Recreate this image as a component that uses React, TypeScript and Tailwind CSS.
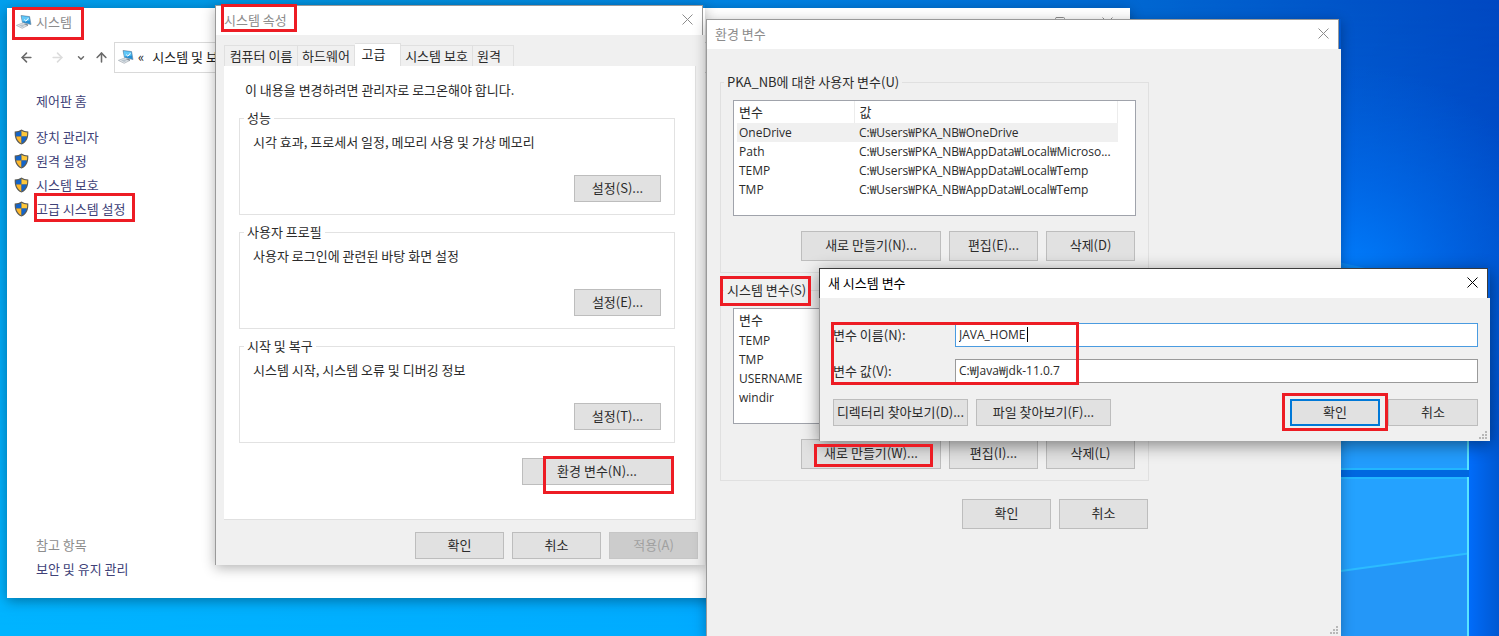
import React from "react";
import { ArrowLeft, ArrowRight, ArrowUp, ChevronDown, Square } from "lucide-react";

const kr = "font-['Noto_Sans_CJK_KR',sans-serif]";
const latin = "font-['Open_Sans','Noto_Sans_CJK_KR',sans-serif]";

function CloseIcon() {
  return (
    <svg width="11" height="11" viewBox="0 0 11 11" fill="none" stroke="currentColor" strokeWidth="1">
      <path d="M.5.5l10 10M10.5.5l-10 10" />
    </svg>
  );
}

function ComputerIcon() {
  return (
    <svg width="16" height="14" viewBox="0 0 16 14" className="shrink-0">
      <path d="M5 .4 13.6 1.600 15 9.600 6.400 7.400z" fill="#2590d6" stroke="#6f879a" strokeWidth=".6" />
      <path d="M5.600 1.100 13 2.100l.6 3.500L6.400 6.500z" fill="#62c8f8" />
      <path d="m8.200 4.600 1.700 1.600 2.500-3" stroke="#fff" strokeWidth="1" fill="none" />
      <path d="m8.500 8.600 3.500.9v1.500l-3.500-.6z" fill="#6c7984" />
      <path d="M.4 10.400 5.600 8.400l5.900 2.200-5.300 2.700z" fill="#e4e9ed" stroke="#a3abb2" strokeWidth=".7" />
      <path d="m3 10.400 2.800-1 3.200 1.300-2.800 1.200z" fill="#b7c2cb" />
    </svg>
  );
}

function ShieldIcon() {
  return (
    <svg width="15" height="16" viewBox="0 0 15 16" className="shrink-0">
      <path d="M7.5.4C5.6 1.7 3.3 2.3.7 2.4c-.3 6 1.4 10.6 6.8 13.2 5.4-2.6 7.1-7.2 6.8-13.2C11.7 2.3 9.4 1.7 7.5.4z" fill="#5b5b55" />
      <path d="M7.5 1.7C5.9 2.7 4 3.2 1.8 3.4c0 1.6.1 3 .4 4.2h5.3z" fill="#1464c8" />
      <path d="M7.5 1.7c1.6 1 3.5 1.5 5.7 1.7 0 1.6-.1 3-.4 4.2H7.5z" fill="#ffc83a" />
      <path d="M7.5 7.6H2.2c.7 3.2 2.4 5.4 5.3 6.9z" fill="#ffb82a" />
      <path d="M7.5 7.6h5.3c-.7 3.2-2.4 5.4-5.3 6.9z" fill="#1464c8" />
    </svg>
  );
}

function Grip() {
  return (
    <svg width="10" height="9" viewBox="0 0 10 9" fill="#b8b8b8" className="absolute right-[2px] bottom-[1px]">
      <path d="M7 0h2v2H7zM4 3h2v2H4zM7 3h2v2H7zM1 6h2v2H1zM4 6h2v2H4zM7 6h2v2H7z" />
    </svg>
  );
}

function Wallpaper() {
  return (
    <svg className="absolute inset-0 h-full w-full" viewBox="0 0 1499 636" preserveAspectRatio="none" aria-hidden="true">
      <defs>
        <linearGradient id="sky" x1="0" x2="1" y1="0" y2="0">
          <stop offset="0" stopColor="#00a0ee" />
          <stop offset=".25" stopColor="#0092e0" />
          <stop offset=".5" stopColor="#0084e4" />
          <stop offset=".75" stopColor="#0068d2" />
          <stop offset=".9" stopColor="#0054c8" />
          <stop offset="1" stopColor="#0048c2" />
        </linearGradient>
        <linearGradient id="floor" x1="0" x2="1" y1="0" y2="0">
          <stop offset="0" stopColor="#00b4ff" />
          <stop offset=".45" stopColor="#00acff" />
          <stop offset=".9" stopColor="#0070ff" />
          <stop offset="1" stopColor="#005ad8" />
        </linearGradient>
        <linearGradient id="fade" x1="0" x2="0" y1="0" y2="1">
          <stop offset="0" stopColor="#000" />
          <stop offset="1" stopColor="#fff" />
        </linearGradient>
        <mask id="down">
          <rect width="1499" height="636" fill="url(#fade)" />
        </mask>
        <radialGradient id="glow" gradientUnits="userSpaceOnUse" cx="1345" cy="285" r="220">
          <stop offset="0" stopColor="#0080ff" />
          <stop offset=".5" stopColor="#0070f0" stopOpacity=".5" />
          <stop offset="1" stopColor="#0068e4" stopOpacity="0" />
        </radialGradient>
        <linearGradient id="edge" x1="0" x2="1" y1="0" y2="0">
          <stop offset="0" stopColor="#006cfa" />
          <stop offset="1" stopColor="#0058d2" />
        </linearGradient>
      </defs>
      <rect width="1499" height="636" fill="url(#sky)" />
      <rect width="1499" height="636" fill="url(#floor)" mask="url(#down)" />
      <rect x="1100" width="399" height="520" fill="url(#glow)" />
      <rect x="1330" y="440" width="169" height="196" fill="#0068e0" />
      <rect x="1469" y="440" width="30" height="196" fill="url(#edge)" />
      <path d="M1330 260l40 9h-40z" fill="#129cff" opacity=".5" />
      <rect x="1330" y="440" width="139" height="30" fill="#229cfd" />
      <rect x="1330" y="477" width="139" height="159" fill="#24a2ff" />
      <path d="M1330 572.500l138-19V636h-138z" fill="#2497f8" />
      <path d="M1330 572.500l138-19" stroke="#2cbcff" strokeWidth="2" />
      <path d="M1330 469h138M1330 478h138" stroke="#22b6ff" strokeWidth="2" />
      <path d="M1468 440v30M1468 477v159" stroke="#58e4ff" strokeWidth="2" />
    </svg>
  );
}

function Dialog({ place, title, active, children }: { place: string; title: string; active?: boolean; children: React.ReactNode }) {
  return (
    <section
      aria-label={title}
      className={`absolute flex flex-col ${place} ${active ? "shadow-[0_4px_16px_rgba(0,0,0,0.45)]" : "shadow-[0_3px_12px_rgba(0,0,0,0.3)]"}`}
    >
      <header
        className={`mr-[2px] flex h-[30px] shrink-0 items-center justify-between border-t border-r border-l bg-white pr-[9px] pb-[2px] pl-2 ${active ? "border-[#3c3c3c] text-black" : "border-[#9a9a9a] text-[#8c8c8c]"}`}
      >
        <h2 className="text-[13px]">{title}</h2>
        <button aria-label="닫기">
          <CloseIcon />
        </button>
      </header>
      <div className="flex grow flex-col border-l border-[#9a9a9a] bg-[#f0f0f0]">{children}</div>
    </section>
  );
}

function Btn({ children, size, primary, disabled }: { children: React.ReactNode; size: string; primary?: boolean; disabled?: boolean }) {
  const look = disabled
    ? "border border-[#c6c6c6] bg-[#cccccc] text-[#a0a0a0]"
    : primary
      ? "border-2 border-[#0078d7] bg-[#e1e1e1]"
      : "border border-[#bdbdbd] bg-[#e1e1e1]";
  return (
    <button disabled={disabled} className={`flex shrink-0 items-center justify-center pb-[2px] text-[13px] whitespace-nowrap ${size} ${look}`}>
      {children}
    </button>
  );
}

function SettingGroup({ title, text, button }: { title: string; text: string; button: string }) {
  return (
    <fieldset className="h-[105px] border border-[#e2e2e2] px-[13px]">
      <legend className="-ml-[9px] px-[3px] text-[13px] leading-4">{title}</legend>
      <p className="mt-[6px] leading-5">{text}</p>
      <div className="mt-[23px] flex justify-end">
        <Btn size="h-[27px] w-[87px]">{button}</Btn>
      </div>
    </fieldset>
  );
}

function VariableGroup({ title, rows, valueHeading, selected, buttons }: { title: string; rows: string[][]; valueHeading?: string; selected?: string; buttons: string[] }) {
  return (
    <fieldset className="h-[199px] border border-[#e0e0e0] px-[12px]">
      <legend className="-ml-[9px] px-[3px] leading-4">{title}</legend>
      <div className="mt-[10px] h-[116px] border border-[#a0a3ab] bg-white pr-[17px] pl-[3px]">
        <table className="w-full table-fixed border-collapse text-left">
          <thead>
            <tr className="h-[22px]">
              <th className="w-[117px] border-r border-[#ececec] p-0 pl-[2px] leading-5 font-normal">변수</th>
              <th className="border-r border-[#ececec] p-0 pl-[5px] leading-5 font-normal">{valueHeading}</th>
            </tr>
          </thead>
          <tbody className={`text-[12px] ${latin}`}>
            {rows.map(([name, value]) => (
              <tr key={name} className={`h-[19px] ${name === selected ? "bg-[#f0f0f0]" : ""}`}>
                <td className="p-0 pl-[2px] leading-[19px]">{name}</td>
                <td className="truncate p-0 pr-1 pl-[5px] leading-[19px]">{value}</td>
              </tr>
            ))}
          </tbody>
        </table>
      </div>
      <div className="mt-[15px] mr-[1px] flex justify-end gap-2">
        <Btn size="h-[30px] w-[140px]">{buttons[0]}</Btn>
        <Btn size="h-[30px] w-[89px]">{buttons[1]}</Btn>
        <Btn size="h-[30px] w-[89px]">{buttons[2]}</Btn>
      </div>
    </fieldset>
  );
}

function Mark({ place }: { place: string }) {
  return <div aria-hidden="true" className={`pointer-events-none absolute border-3 border-[#ed1c24] ${place}`} />;
}

const userVars = [
  ["OneDrive", "C:₩Users₩PKA_NB₩OneDrive"],
  ["Path", "C:₩Users₩PKA_NB₩AppData₩Local₩Microso..."],
  ["TEMP", "C:₩Users₩PKA_NB₩AppData₩Local₩Temp"],
  ["TMP", "C:₩Users₩PKA_NB₩AppData₩Local₩Temp"],
];
const systemVars = [["TEMP", ""], ["TMP", ""], ["USERNAME", ""], ["windir", ""]];
const tasks = ["장치 관리자", "원격 설정", "시스템 보호", "고급 시스템 설정"];
const tabs = [
  ["컴퓨터 이름", "w-[74px]"],
  ["하드웨어", "w-[57px]"],
  ["고급", "w-[46px]"],
  ["시스템 보호", "w-[72px]"],
  ["원격", "w-[41px]"],
];

function SystemWindow() {
  return (
    <section className="absolute top-[8px] left-[7px] flex h-[590px] w-[1123px] flex-col bg-white shadow-[0_3px_12px_rgba(0,0,0,0.35)]">
      <header className="flex h-[30px] shrink-0 items-center gap-1 pr-[9px] pb-[2px] pl-[9px] text-[#8c8c8c]">
        <ComputerIcon />
        <h1>시스템</h1>
        <div className="ml-auto flex items-center gap-9 pr-2">
          <Square size={12} strokeWidth={2} />
          <CloseIcon />
        </div>
      </header>
      <nav className="flex h-[38px] shrink-0 items-center pt-[1px] pl-3 text-[#6a6a6a]">
        <ArrowLeft size={15} strokeWidth={2.500} />
        <ArrowRight size={15} strokeWidth={2.500} className="ml-4 text-[#dcdcdc]" />
        <ChevronDown size={10} strokeWidth={3.500} className="ml-[11px]" />
        <ArrowUp size={15} strokeWidth={2.500} className="ml-2" />
        <div className="ml-[5px] flex h-[31px] grow items-center border border-[#d9d9d9] pb-[2px] pl-[3px] text-[#222]">
          <ComputerIcon />
          <span className="ml-1 leading-4">«</span>
          <span className="ml-2 leading-4">시스템 및 보안</span>
        </div>
      </nav>
      <aside className="flex grow flex-col pt-[13px] pb-[17px] pl-[7px] text-[#404278]">
        <a href="#home" className="ml-[22px] leading-6">제어판 홈</a>
        <ul className="mt-3">
          {tasks.map((t) => (
            <li key={t}>
              <a href="#task" className="flex h-6 items-center gap-[7px]">
                <ShieldIcon />
                {t}
              </a>
            </li>
          ))}
        </ul>
        <p className="mt-auto ml-[22px] leading-6 text-[#8d8d8d]">참고 항목</p>
        <a href="#security" className="ml-[22px] leading-6">보안 및 유지 관리</a>
      </aside>
    </section>
  );
}

export default function App() {
  return (
    <main className={`relative min-h-screen overflow-hidden bg-[#00a0f0] text-[13px] text-[#2b2b2b] ${kr}`}>
      <Wallpaper />
      <SystemWindow />

      <Dialog place="top-[5px] left-[215px] w-[490px]" title="시스템 속성">
        <div className="px-2 pt-2 pb-[6px]">
          <div role="tablist" className="flex items-end">
            {tabs.map(([name, width]) => (
              <button
                key={name}
                role="tab"
                aria-selected={name === "고급"}
                className={`border-t border-r border-[#e0e0e0] whitespace-nowrap ${width} ${name === "고급" ? "h-[23px] bg-white pr-2 pb-1" : "h-[21px] bg-[#f0f0f0] pb-[2px]"} ${name === "컴퓨터 이름" ? "border-l" : ""} ${name === "원격" ? "pr-2" : ""}`}
              >
                {name}
              </button>
            ))}
          </div>
          <div className="mr-[1px] h-[454px] border-r border-b border-[#e0e0e0] bg-white pt-[14px] pr-[20px] pl-[15px]">
            <p className="pl-[6px] leading-5">이 내용을 변경하려면 관리자로 로그온해야 합니다.</p>
            <div className="mt-[10px] flex flex-col gap-[9px]">
              <SettingGroup title="성능" text="시각 효과, 프로세서 일정, 메모리 사용 및 가상 메모리" button="설정(S)..." />
              <SettingGroup title="사용자 프로필" text="사용자 로그인에 관련된 바탕 화면 설정" button="설정(E)..." />
              <SettingGroup title="시작 및 복구" text="시스템 시작, 시스템 오류 및 디버깅 정보" button="설정(T)..." />
            </div>
            <div className="mt-[15px] mr-[3px] flex justify-end">
              <Btn size="h-[27px] w-[150px]">환경 변수(N)...</Btn>
            </div>
          </div>
          <div className="mt-[12px] -mr-[1px] flex justify-end gap-2">
            <Btn size="h-[27px] w-[89px]">확인</Btn>
            <Btn size="h-[27px] w-[89px]">취소</Btn>
            <Btn size="h-[27px] w-[89px]" disabled>적용(A)</Btn>
          </div>
        </div>
      </Dialog>

      <Dialog place="top-[19px] left-[706px] bottom-0 w-[635px]" title="환경 변수">
        <div className="w-[442px] pt-[25px] pl-[13px]">
          <div className="flex flex-col gap-[9px]">
            <VariableGroup title="PKA_NB에 대한 사용자 변수(U)" valueHeading="값" rows={userVars} selected="OneDrive" buttons={["새로 만들기(N)...", "편집(E)...", "삭제(D)"]} />
            <VariableGroup title="시스템 변수(S)" rows={systemVars} buttons={["새로 만들기(W)...", "편집(I)...", "삭제(L)"]} />
          </div>
          <div className="mt-[18px] mr-[1px] flex justify-end gap-2">
            <Btn size="h-[30px] w-[89px]">확인</Btn>
            <Btn size="h-[30px] w-[89px]">취소</Btn>
          </div>
        </div>
        <Grip />
      </Dialog>

      <Dialog place="top-[268px] left-[819px] w-[671px]" title="새 시스템 변수" active>
        <form className="pt-[25px] pr-3 pb-[15px] pl-[13px]" onSubmit={(e) => e.preventDefault()}>
          <div className="flex items-center">
            <label htmlFor="name" className="w-[122px]">변수 이름(N):</label>
            <div className="relative flex grow">
              <input id="name" defaultValue="JAVA_HOME" className={`h-[24px] w-full border border-[#4a9be0] bg-white px-[3px] pb-[2px] text-[12px] outline-none ${latin}`} />
              <span className="absolute top-[4px] left-[72px] h-[15px] w-px bg-black" />
            </div>
          </div>
          <div className="mt-3 flex items-center">
            <label htmlFor="value" className="w-[122px]">변수 값(V):</label>
            <input id="value" defaultValue="C:₩Java₩jdk-11.0.7" className={`h-[24px] grow border border-[#9a9a9a] bg-white px-[3px] pb-[2px] text-[12px] outline-none ${latin}`} />
          </div>
          <div className="mt-4 flex gap-2">
            <Btn size="h-[27px] w-[135px]">디렉터리 찾아보기(D)...</Btn>
            <Btn size="h-[27px] w-[135px]">파일 찾아보기(F)...</Btn>
            <div className="ml-auto flex gap-2">
              <Btn size="h-[27px] w-[90px]" primary>확인</Btn>
              <Btn size="h-[27px] w-[90px]">취소</Btn>
            </div>
          </div>
        </form>
        <Grip />
      </Dialog>

      <Mark place="top-[7px] left-[12px] h-[33px] w-[72px]" />
      <Mark place="top-[4px] left-[221px] h-[28px] w-[76px]" />
      <Mark place="top-[193px] left-[34px] h-[29px] w-[101px]" />
      <Mark place="top-[456px] left-[543px] h-[38px] w-[131px]" />
      <Mark place="top-[276px] left-[720px] h-[30px] w-[91px]" />
      <Mark place="top-[322px] left-[831px] h-[63px] w-[248px]" />
      <Mark place="top-[444px] left-[814px] h-[23px] w-[119px]" />
      <Mark place="top-[393px] left-[1282px] h-[38px] w-[106px]" />
    </main>
  );
}
